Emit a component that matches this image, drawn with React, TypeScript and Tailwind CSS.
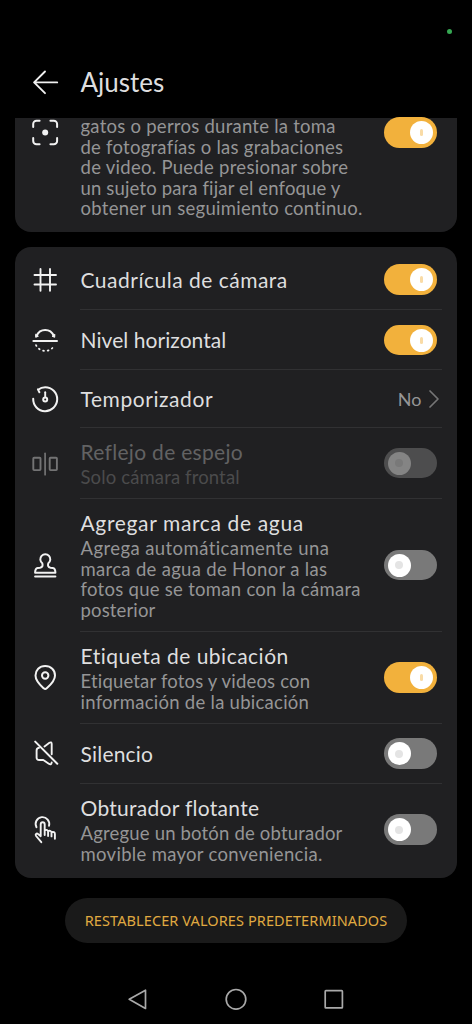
import type { ReactNode } from 'react';

type Line = [text: string, className: string];

function Toggle({ on = false, disabled = false }: { on?: boolean; disabled?: boolean }) {
  return (
    <button
      role="switch"
      aria-checked={on}
      disabled={disabled}
      className={`flex h-[30.5px] w-[53px] shrink-0 items-center rounded-full ${
        on ? 'justify-end bg-[#f2b13c] pr-1' : disabled ? 'bg-[#4d4d4e] pl-[3.5px]' : 'bg-[#797979] pl-[3.5px]'
      }`}
    >
      <span
        className={`flex size-[23px] items-center justify-center rounded-full ${disabled ? 'bg-[#848484]' : 'bg-white'}`}
      >
        {on ? (
          <span className="h-[7px] w-[2.5px] rounded-full bg-[#f9dba6]" />
        ) : (
          <span className={`size-2 rounded-full ${disabled ? 'bg-[#797979]' : 'bg-[#e4e4e4]'}`} />
        )}
      </span>
    </button>
  );
}

function Icon({ children, className = 'text-[#f2f2f2]' }: { children: ReactNode; className?: string }) {
  return (
    <svg
      viewBox="0 0 30 30"
      className={`size-[30px] shrink-0 ${className}`}
      fill="none"
      stroke="currentColor"
      strokeWidth="1.9"
      strokeLinecap="round"
      strokeLinejoin="round"
    >
      {children}
    </svg>
  );
}

function Row({
  icon,
  title,
  lines = [],
  control,
  className,
  textClass,
  last = false,
  dim = false,
  nudge = '',
}: {
  icon: ReactNode;
  title: Line;
  lines?: Line[];
  control: ReactNode;
  className: string;
  textClass: string;
  last?: boolean;
  dim?: boolean;
  nudge?: string;
}) {
  return (
    <div className={`flex pr-[15px] ${className}`}>
      <div className={`flex w-[65px] shrink-0 items-center pl-[15px] ${nudge}`}>{icon}</div>
      <div className={`flex min-w-0 flex-1 pr-[5px] ${last ? '' : 'border-b border-[#313133]'}`}>
        <div className={`min-w-0 flex-1 whitespace-nowrap pl-[0.5px] ${textClass}`}>
          <div className={`mb-[3px] text-[21px] leading-[24px] ${dim ? 'text-[#626263]' : 'text-[#dededf]'} ${title[1]}`}>
            {title[0]}
          </div>
          {lines.map(([text, spacing]) => (
            <div
              key={text}
              className={`text-[18.5px] leading-[20.5px] ${dim ? 'text-[#4b4b4c]' : 'text-[#959596]'} ${spacing}`}
            >
              {text}
            </div>
          ))}
        </div>
        <div className={`flex shrink-0 items-center ${nudge}`}>{control}</div>
      </div>
    </div>
  );
}

const focusLines: Line[] = [
  ['gatos o perros durante la toma', 'tracking-[0.25px]'],
  ['de fotografías o las grabaciones', 'tracking-[0.25px]'],
  ['de video. Puede presionar sobre', 'tracking-[0.28px]'],
  ['un sujeto para fijar el enfoque y', 'tracking-[0.15px]'],
  ['obtener un seguimiento continuo.', 'tracking-[0.28px]'],
];

export default function App() {
  return (
    <div className="flex h-[1024px] w-[472px] flex-col overflow-hidden bg-black font-['Lato',sans-serif]">
      <div className="flex h-[58px] justify-end pr-[20px] pt-[29px]">
        <span className="size-[5px] rounded-full bg-[#36a853]" />
      </div>
      <header className="flex h-[59.5px] pl-[30px]">
        <svg
          viewBox="0 0 30 30"
          className="mt-[9px] size-[30px] text-[#f0f0f0]"
          fill="none"
          stroke="currentColor"
          strokeWidth="1.9"
          strokeLinecap="round"
          strokeLinejoin="round"
        >
          <path d="M27.2 15.4H4.3M15 4.5L4.1 15.4L15 26.2" />
        </svg>
        <h1 className="ml-[20.5px] mt-[8px] text-[26px] leading-[32px] text-[#dededf]">Ajustes</h1>
      </header>

      <main className="px-[15px]">
        <section className="flex h-[114.5px] rounded-b-[16px] bg-[#202022] pr-5">
          <div className="w-[65px] shrink-0 pl-[15px]">
            <Icon>
              <path
                strokeWidth="2"
                d="M3.2 9.1V6A3.3 3.3 0 0 1 6.5 2.7H9.6M20.4 2.7H23.8A3.3 3.3 0 0 1 27.1 6V9.1M27.1 19.9V22.9A3.3 3.3 0 0 1 23.8 26.2H20.4M9.6 26.2H6.5A3.3 3.3 0 0 1 3.2 22.9V19.9"
              />
              <circle cx="15.2" cy="14.5" r="3" fill="currentColor" stroke="none" />
            </Icon>
          </div>
          <div className="-mt-[1.5px] flex-1 whitespace-nowrap pl-[0.5px]">
            {focusLines.map(([text, spacing]) => (
              <div key={text} className={`text-[18.5px] leading-[20.5px] text-[#959596] ${spacing}`}>
                {text}
              </div>
            ))}
          </div>
          <div className="-mt-[0.5px]">
            <Toggle on />
          </div>
        </section>

        <section className="mt-[15px] rounded-[16px] bg-[#202022]">
          <Row
            className="h-[63px]"
            textClass="pt-[20.5px]"
            nudge="pt-[2.5px]"
            title={['Cuadrícula de cámara', 'tracking-[0.5px]']}
            icon={
              <Icon>
                <path d="M4.5 10H26M4.5 19.5H26M10.5 4V25.8M20 4V25.8" />
              </Icon>
            }
            control={<Toggle on />}
          />
          <Row
            className="h-[60px]"
            textClass="pt-[18px]"
            nudge="pt-[1px]"
            title={['Nivel horizontal', 'tracking-[0.06px]']}
            icon={
              <Icon>
                <path d="M3.4 15H27" strokeWidth="2" />
                <path d="M6.6 9.8C10 2 20.4 2 23.8 9.8" strokeWidth="2" />
                <path d="M5.6 8.6L5.7 11.3L8 10.4Z M24.8 8.6L24.7 11.3L22.4 10.4Z" fill="currentColor" strokeWidth="1" />
                <path d="M6 19.1C9.7 26.8 20.8 26.8 24.5 19.1" strokeDasharray="0.9 3.7" strokeWidth="1.7" />
              </Icon>
            }
            control={<Toggle on />}
          />
          <Row
            className="h-[58px]"
            textClass="pt-[17px]"
            title={['Temporizador', 'tracking-[0.57px]']}
            icon={
              <Icon>
                <path d="M3.2 14.8A12 12 0 1 0 15.2 3.2C12.4 3.2 10.2 4 8.1 5.7M7.9 5.4L9.4 8.2" strokeWidth="2" />
                <path d="M15.2 8.2V13" />
                <circle cx="15.2" cy="15.4" r="2" strokeWidth="2" />
              </Icon>
            }
            control={
              <div className="-mr-[2.5px] flex items-center">
                <span className="text-[18px] leading-[24px] text-[#959596]">No</span>
                <svg
                  viewBox="0 0 12 20"
                  className="ml-[6px] h-5 w-3"
                  fill="none"
                  stroke="#757576"
                  strokeWidth="1.7"
                  strokeLinecap="round"
                  strokeLinejoin="round"
                >
                  <path d="M2 2L10 10L2 18" />
                </svg>
              </div>
            }
          />
          <Row
            className="h-[71px]"
            textClass="pt-[12px]"
            dim
            title={['Reflejo de espejo', 'tracking-[0.3px]']}
            lines={[['Solo cámara frontal', 'tracking-[0.13px]']]}
            icon={
              <Icon className="text-[#737374]">
                <rect x="3.3" y="8.7" width="7.2" height="12.4" rx="0.8" />
                <rect x="19.7" y="8.7" width="7.2" height="12.4" rx="0.8" />
                <path d="M15.1 4.3V25.7" strokeWidth="1.7" />
              </Icon>
            }
            control={<Toggle disabled />}
          />
          <Row
            className="h-[133px]"
            textClass="pt-[12px]"
            title={['Agregar marca de agua', 'tracking-[0.64px]']}
            lines={[
              ['Agrega automáticamente una', 'tracking-[0.42px]'],
              ['marca de agua de Honor a las', 'tracking-[0.31px]'],
              ['fotos que se toman con la cámara', 'tracking-[0.28px]'],
              ['posterior', 'tracking-[0.15px]'],
            ]}
            icon={
              <Icon>
                <path
                  strokeWidth="2"
                  d="M12.3 12.3A5 5 0 1 1 18.3 12.3C17.6 14.6 18 16.3 20.5 16.7L22.8 17C24.6 17.3 25.4 18.8 25.4 21.7H5.1C5.1 18.8 5.9 17.3 7.7 17L10 16.7C12.5 16.3 13 14.6 12.3 12.3Z"
                />
                <path d="M5.1 25.6H25.4" strokeWidth="2" />
              </Icon>
            }
            control={<Toggle />}
          />
          <Row
            className="h-[92px]"
            textClass="pt-[12px]"
            title={['Etiqueta de ubicación', 'tracking-[0.49px]']}
            lines={[
              ['Etiquetar fotos y videos con', 'tracking-[0.18px]'],
              ['información de la ubicación', 'tracking-[0.26px]'],
            ]}
            icon={
              <Icon>
                <path
                  strokeWidth="2"
                  d="M15.2 3.1C9.4 3.1 5.5 7.2 5.5 12.5C5.5 18.1 10.4 22.3 13.7 25.3C14.6 26.1 15.8 26.1 16.7 25.3C20 22.3 25 18.1 25 12.5C25 7.2 21 3.1 15.2 3.1Z"
                />
                <circle cx="15.2" cy="12.5" r="3.2" strokeWidth="2" />
              </Icon>
            }
            control={<Toggle on />}
          />
          <Row
            className="h-[60px]"
            textClass="pt-[17.5px]"
            title={['Silencio', 'tracking-[0.2px]']}
            icon={
              <Icon>
                <path d="M5.2 2.6L27.3 24.8" strokeWidth="2" />
                <path d="M14.5 7.4L19.4 3.8C20.8 2.9 21.7 3.4 21.7 5V15.2M21.7 23.4C21.5 25.7 20.3 25.7 18.8 24.7L13.3 21H9.2C7.5 21 6.6 20.1 6.6 18.4V11.6C6.6 10.1 7.3 9.1 9 8.8" />
              </Icon>
            }
            control={<Toggle />}
          />
          <Row
            className="h-[94px]"
            textClass="pt-[12px]"
            nudge="pb-[3px]"
            last
            title={['Obturador flotante', 'tracking-[0.28px]']}
            lines={[
              ['Agregue un botón de obturador', 'tracking-[0.18px]'],
              ['movible mayor conveniencia.', 'tracking-[0.31px]'],
            ]}
            icon={
              <Icon>
                <path d="M6.5 12.2A6.8 6.8 0 1 1 19 10.8" />
                <path d="M11.3 27.2L6.1 21C4.9 19.4 6.6 17.8 8.1 19.1L10.7 21.2V9.4C10.7 6.5 14.7 6.5 14.7 9.4V20M14.7 15.5C16.5 14.3 18.1 15 18.1 16.8V21M18.1 16.2C20 15.3 21.5 16.1 21.5 17.6V21.4M21.5 17.2C23.4 16.5 24.9 17.3 24.9 19V23.8" />
              </Icon>
            }
            control={<Toggle />}
          />
        </section>
      </main>

      <button className="ml-[65px] mt-5 h-[45px] w-[342px] shrink-0 whitespace-nowrap rounded-full bg-[#1a1a1a] pt-[1.5px] text-center font-['Noto_Sans',sans-serif] text-[14.5px] tracking-[0.1px] text-[#e0aa41]">
        RESTABLECER VALORES PREDETERMINADOS
      </button>

      <nav className="mt-[41px] flex pl-[122px]">
        <svg viewBox="0 0 30 30" className="size-[30px]" fill="none" stroke="#a9a9a9" strokeWidth="1.7" strokeLinejoin="round">
          <path d="M23.5 6.2V24.4L7.2 15.3Z" />
        </svg>
        <svg viewBox="0 0 30 30" className="ml-[69px] size-[30px]" fill="none" stroke="#a9a9a9" strokeWidth="1.7">
          <circle cx="15" cy="15.3" r="9.8" />
        </svg>
        <svg viewBox="0 0 30 30" className="ml-[68px] size-[30px]" fill="none" stroke="#a9a9a9" strokeWidth="1.7" strokeLinejoin="round">
          <rect x="6.2" y="6.7" width="17.2" height="17.2" rx="0.7" />
        </svg>
      </nav>
    </div>
  );
}
